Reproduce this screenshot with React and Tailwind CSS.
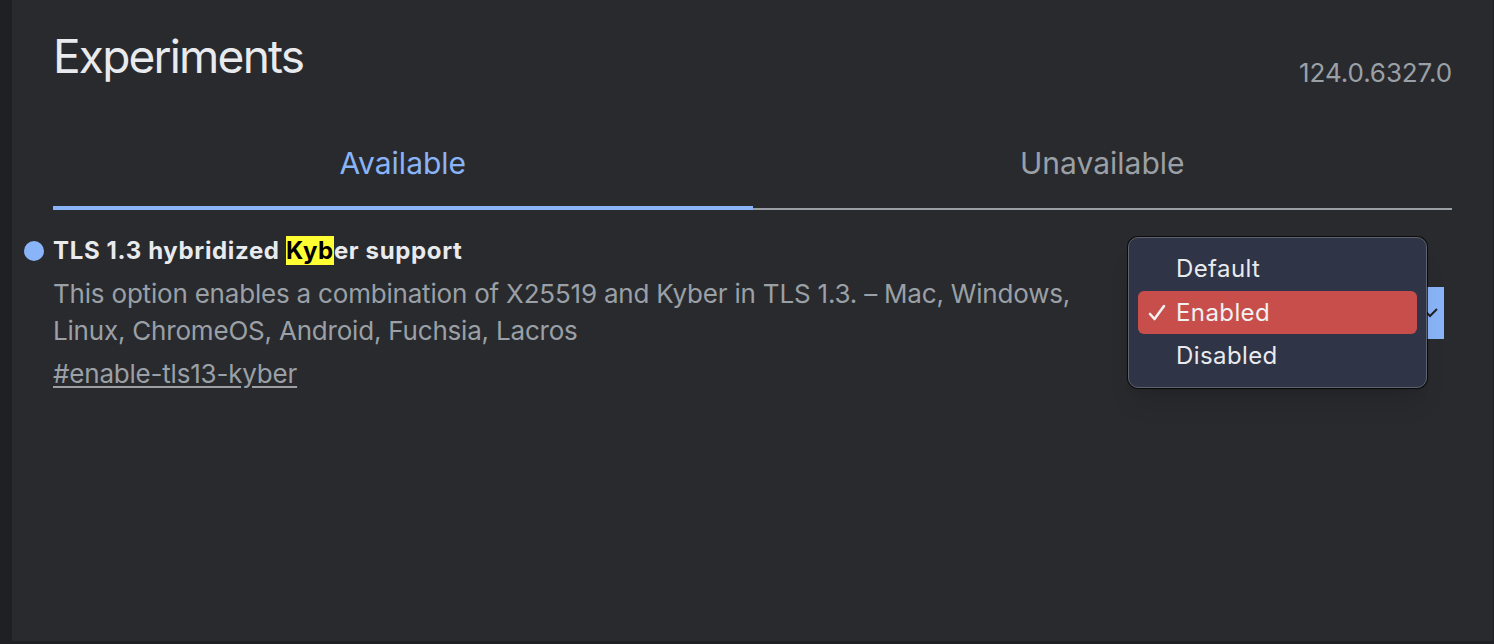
import React from 'react';

export default function App() {
    const font = { fontFamily: 'Inter, "Noto Sans", sans-serif' };

    return (
        <div className="w-[1494px] h-[644px] bg-[#1f2023] flex overflow-hidden" style={font}>
            <div className="w-[12px] shrink-0" />

            {/* Main panel */}
            <div className="w-[1481px] h-[641px] bg-[#292a2e] px-[41px]">
                {/* Header */}
                <div className="flex justify-between">
                    <h1 className="pt-[28px] text-[46px] leading-[56px] text-[#e8eaed] font-normal tracking-[-1.8px]">
                        Experiments
                    </h1>
                    <span className="pt-[57px] text-[26px] leading-[32px] text-[#9aa0a6] tracking-[-0.1px]">
                        124.0.6327.0
                    </span>
                </div>

                {/* Tabs */}
                <div className="flex mt-[56px] items-end">
                    <div className="flex-1 flex flex-col items-center">
                        <span className="text-[30px] leading-[36px] text-[#8ab4f8]">Available</span>
                        <div className="w-full h-[4px] bg-[#8ab4f8] mt-[25px]" />
                    </div>
                    <div className="flex-1 flex flex-col items-center">
                        <span className="text-[30px] leading-[36px] text-[#9aa0a6]">Unavailable</span>
                        <div className="w-full h-[2px] bg-[#9aa0a6] mt-[27px]" />
                    </div>
                </div>

                {/* Experiment row */}
                <div className="flex items-center mt-[25px]">
                    <div className="flex-1 -ml-[29px] flex">
                        <span className="w-5 h-5 mt-[6px] mr-[9px] rounded-full bg-[#8ab4f8] shrink-0" />
                        <div>
                            <h3 className="text-[24px] leading-[32px] font-bold text-[#e8eaed] tracking-[0.65px]">
                                TLS 1.3 hybridized <mark className="bg-[#ffff33] text-black">Kyb</mark>er support
                            </h3>
                            <p className="mt-[8px] w-[1080px] text-[26px] leading-[37px] text-[#9aa0a6] tracking-[-0.2px]">
                                This option enables a combination of X25519 and Kyber in TLS 1.3. – Mac, Windows, Linux, ChromeOS, Android, Fuchsia, Lacros
                            </p>
                            <a href="#" className="block mt-[8px] text-[26px] leading-[34px] text-[#9aa0a6] underline underline-offset-[3px] tracking-[-0.2px]">
                                #enable-tls13-kyber
                            </a>
                        </div>
                    </div>

                    {/* Select with open menu */}
                    <div className="relative mr-[8px] shrink-0">
                        <div className="w-[150px] h-[52px] bg-[#8ab4f8] flex items-center justify-end pr-[6px]">
                            <svg width="16" height="10" viewBox="0 0 16 10" fill="none" stroke="#202124" strokeWidth="2">
                                <path d="M1 1l7 7 7-7" />
                            </svg>
                        </div>

                        <div className="absolute right-[17px] -top-[50px] w-[299px] h-[151px] rounded-[10px] bg-[#2f3446] border border-[#5f636d] ring-1 ring-black/70 shadow-xl px-[9px] pt-[9px]">
                            <div className="h-[44px] flex items-center pl-[38px] text-[24px] text-[#e8eaed] tracking-[0.4px]">Default</div>
                            <div className="h-[43px] flex items-center rounded-[6px] bg-[#c74e4b] text-[24px] text-[#f1f1f1] tracking-[0.4px]">
                                <span className="w-[38px] pl-[9px] flex items-center">
                                    <svg width="20" height="20" viewBox="0 0 20 20" fill="none" stroke="#f1f1f1" strokeWidth="2.6" strokeLinecap="round" strokeLinejoin="round">
                                        <path d="M3 11l4.5 5L17 3" />
                                    </svg>
                                </span>
                                Enabled
                            </div>
                            <div className="h-[44px] flex items-center pl-[38px] text-[24px] text-[#e8eaed] tracking-[0.4px]">Disabled</div>
                        </div>
                    </div>
                </div>
            </div>
        </div>
    );
}
